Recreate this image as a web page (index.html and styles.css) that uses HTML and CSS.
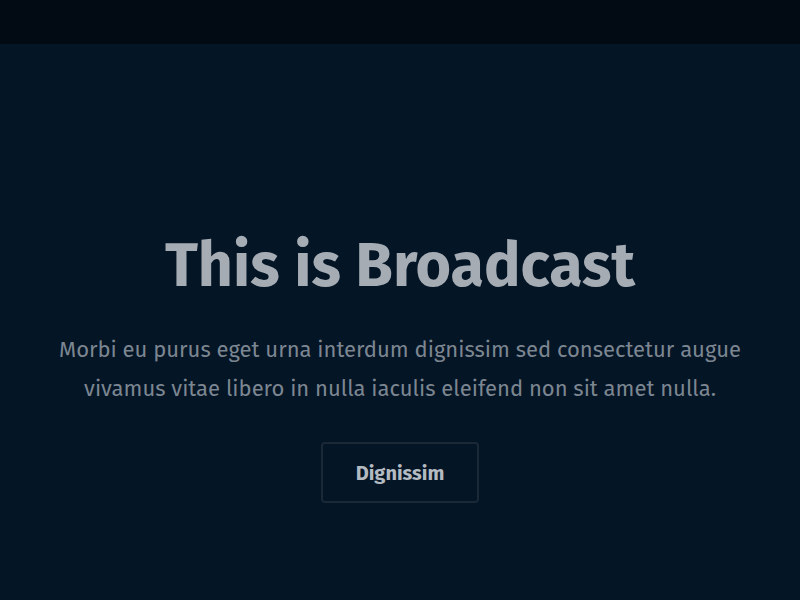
FILE: index.html
```html
<!DOCTYPE html>
<html lang="en">
<head>
<meta charset="utf-8">
<title>Broadcast</title>
<link rel="stylesheet" href="styles.css">
</head>
<body>
<header class="topbar"></header>
<section class="hero">
  <h1 class="hero-title">This is Broadcast</h1>
  <p class="hero-text">Morbi eu purus eget urna interdum dignissim sed consectetur augue<br>vivamus vitae libero in nulla iaculis eleifend non sit amet nulla.</p>
  <a class="hero-button" href="#">Dignissim</a>
</section>
</body>
</html>
```
FILE: styles.css
```css
html, body {
  margin: 0;
  padding: 0;
  height: 100%;
}
body {
  background: #041526;
  font-family: "Fira Sans", "Noto Sans", "Open Sans", sans-serif;
  overflow: hidden;
}
.topbar {
  height: 44px;
  background: #020a14;
}
.hero {
  display: flex;
  flex-direction: column;
  align-items: center;
  padding-top: 186px;
}
.hero-title {
  margin: 0;
  font-size: 61px;
  line-height: 72px;
  font-weight: 700;
  color: #a5acb4;
}
.hero-text {
  margin: 28px 0 0;
  font-size: 22px;
  line-height: 39px;
  color: #7c8691;
  text-align: center;
}
.hero-button {
  margin-top: 34px;
  display: flex;
  align-items: center;
  justify-content: center;
  width: 154px;
  height: 57px;
  border: 2px solid #1b2836;
  border-radius: 4px;
  color: #b4bac1;
  font-size: 20px;
  font-weight: 700;
  text-decoration: none;
}
```
